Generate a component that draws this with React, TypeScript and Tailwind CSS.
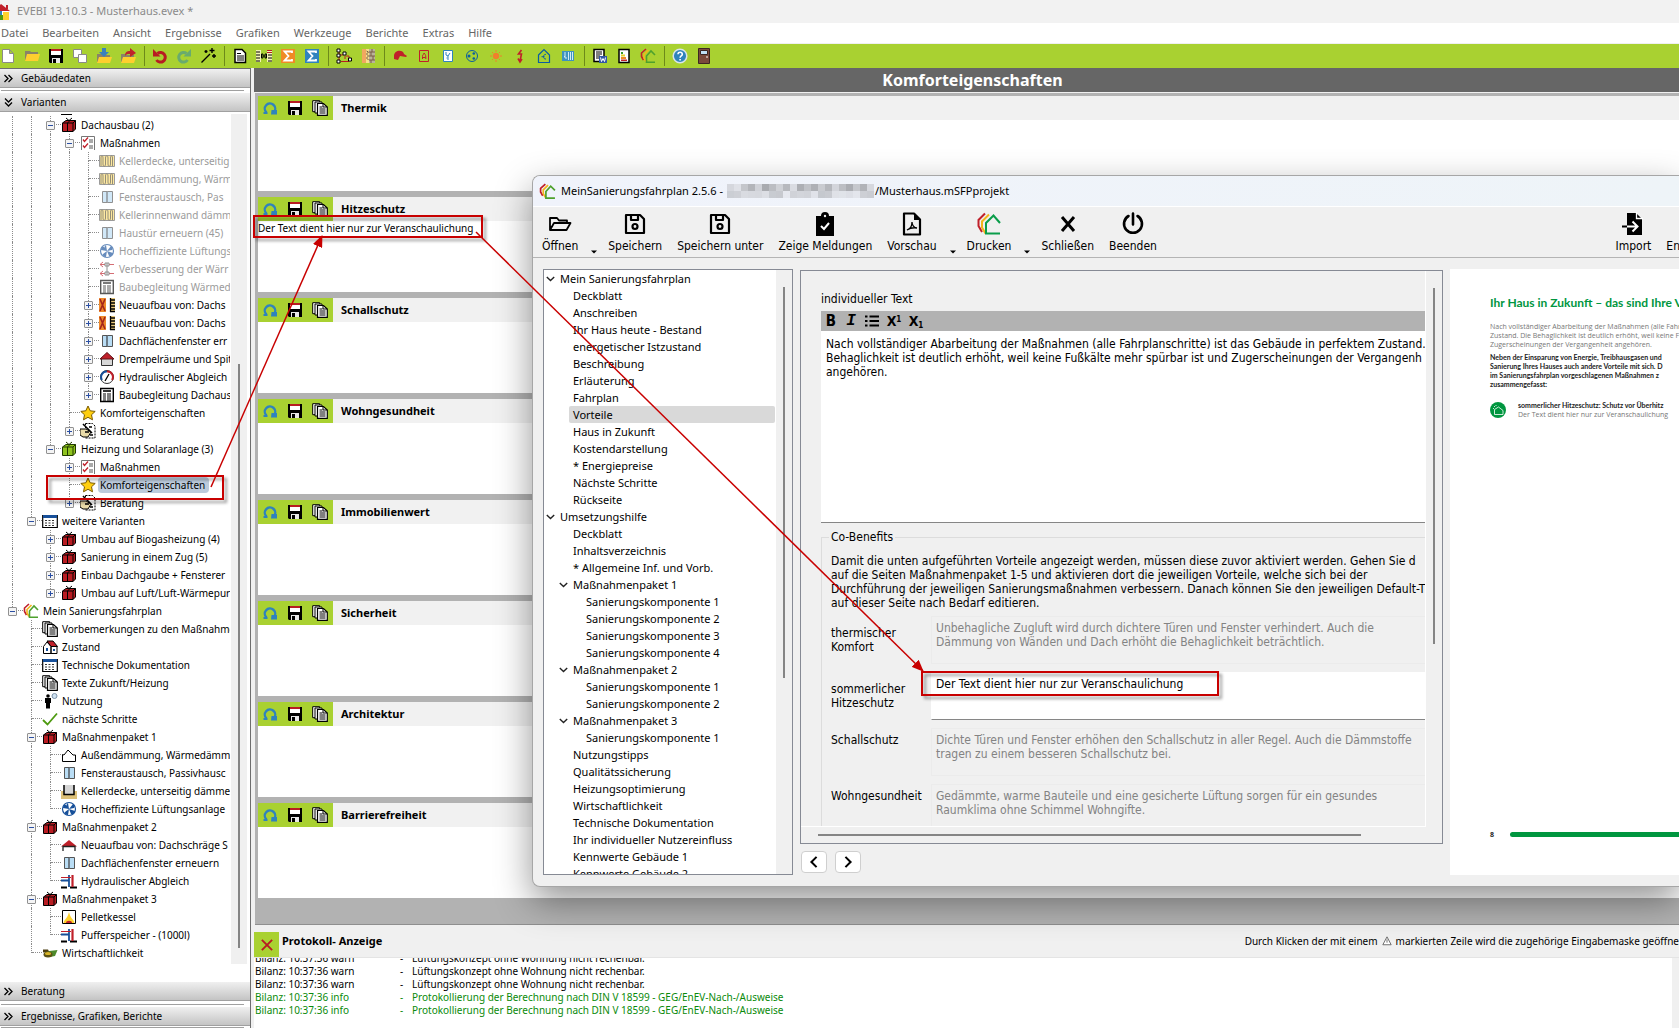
import { Fragment, type ReactNode } from "react";

// Symbole, alle auf einem 16x16 Raster
const icons: Record<string, ReactNode> = {
  newDoc: (
    <path d="M2.500 1.500h7l4 4v9h-11z M9.500 1.500v4h4" fill="#fff" stroke="#8a8a8a" />
  ),
  folder: (
    <>
      <path d="M1 3h5l1 1h7v8H1z" fill="#8a8368" />
      <path d="M3 6h13l-2 7H1z" fill="#ffcf2e" />
    </>
  ),
  floppy: (
    <>
      <path d="M1 1h14v14H2l-1-1z" fill="#000" />
      <path d="M3 1h10v6H3z" fill="#fff" />
      <path d="M3 1h10v2H3z" fill="#b81c22" />
      <path d="M4 10h8v5H4z" fill="#e8e8e8" />
      <path d="M5 11h3v4H5z" fill="#000" />
    </>
  ),
  copy: (
    <>
      <path d="M1.500 1.500h8v8h-8z" fill="#fff" stroke="#8a8a8a" />
      <path d="M6.500 6.500h8v8h-8z" fill="#fff" stroke="#8a8a8a" />
    </>
  ),
  folderDown: (
    <>
      <path d="M1 6h5l1 1h7v7H1z" fill="#8a8368" />
      <path d="M3 9h13l-2 6H1z" fill="#ffcf2e" />
      <path d="M6 0h4v4h3L8 9 3 4h3z" fill="#3a80bd" />
    </>
  ),
  folderOut: (
    <>
      <path d="M1 6h5l1 1h7v7H1z" fill="#8a8368" />
      <path d="M3 9h13l-2 6H1z" fill="#ffcf2e" />
      <path d="M5 8c0-4 2-5 5-5V0l6 5-6 4V6c-2 0-4 0-5 2z" fill="#c0232a" />
    </>
  ),
  undo: (
    <>
      <path d="M5.500 5.500A4.800 4.800 0 1 1 4.500 12" fill="none" stroke="#b81c22" strokeWidth="3" />
      <path d="M1 1v7.500h7.500z" fill="#b81c22" />
    </>
  ),
  redo: (
    <>
      <path d="M10.500 5.500A4.800 4.800 0 1 0 11.500 12" fill="none" stroke="#69ab6e" strokeWidth="3" />
      <path d="M15 1v7.500H7.500z" fill="#69ab6e" />
    </>
  ),
  wand: (
    <path d="M1.500 14.500 10 6M12 0v5M9.500 2.500h5M6 2v3M4.500 3.500h3M14 6v4M12 8h4" stroke="#000" strokeWidth="1.400" fill="none" />
  ),
  doc: (
    <>
      <path d="M3 1.500h7l3.500 3.500v9.500H3z" fill="#fff" stroke="#000" strokeWidth="1.500" />
      <path d="M5 5.500h4M5 8h7M5 10h7M5 12h7" stroke="#000" />
    </>
  ),
  docLink: (
    <>
      <path d="M0 2h5v12H0zM11 2h5v12h-5z" fill="#f3f3b8" />
      <path d="M0 4h4M0 7h4M0 10h4M0 13h4M12 7h4M12 10h4M12 13h4" stroke="#000" />
      <path d="M11 2.500h5M11 4.500h5" stroke="#b81c22" />
      <path d="M5.500 6v4h1.500V6zM9 6v4h1.500V6zM7 8h2" stroke="#000" fill="none" />
    </>
  ),
  sigmaOrange: (
    <>
      <path d="M1 1h14v14H1z" fill="#f08a24" />
      <path d="M12 5V3.500H4.500L8.500 8l-4 4.500H12V11" fill="none" stroke="#fff" strokeWidth="1.800" />
    </>
  ),
  sigmaBlue: (
    <>
      <path d="M1 1h14v14H1z" fill="#2f83bd" />
      <path d="M12 5V3.500H4.500L8.500 8l-4 4.500H12V11" fill="none" stroke="#fff" strokeWidth="1.800" />
    </>
  ),
  nodes: (
    <>
      <path d="M3 3v10M3 7h4M9 8v3M5 13.500h8M13 11V8h-3" fill="none" stroke="#b81c22" />
      <path d="M1 1h3v3H1zM1 6h3v3H1zM1 12h3v3H1zM7 4h3v3H7zM12.500 10h3v3h-3z" fill="#fff" stroke="#000" />
    </>
  ),
  wall: (
    <>
      <path d="M2 1h4v14H2z" fill="#f0a860" />
      <path d="M6 1h3v14H6z" fill="#f5e08a" />
      <path d="M9 1h6v14H9z" fill="#b9b39a" />
      <path d="M6.500 3l2 1-2 2 2 2-2 2 2 2M9 4h6M9 8h6M9 12h6M12 1v3M11 4v4M13 8v4M11 12v3" fill="none" stroke="#7a5c46" />
    </>
  ),
  cap: <path d="M2 8c0-6 9-7 10-2l3 2-1 1-6-1-2 4-4-1z" fill="#c0202a" />,
  boxA: (
    <>
      <path d="M3.500 2.500h9v11h-9z" fill="none" stroke="#c0202a" />
      <path d="M6.500 11V8.500C6.500 6 8 7 8 5c2 2 1.800 3 1.800 6M6.500 9.500h3" fill="none" stroke="#c0202a" />
    </>
  ),
  boxY: (
    <>
      <path d="M3.500 2.500h9v11h-9z" fill="#fff" stroke="#2f83bd" />
      <path d="M6 4v3l2 1 2-3M8 8v4M6.500 10h1" fill="none" stroke="#2f83bd" />
    </>
  ),
  fanLine: (
    <>
      <circle cx="8" cy="8" r="5.500" fill="none" stroke="#0b5da0" />
      <circle cx="5" cy="8" r="1.500" fill="#0b5da0" />
      <circle cx="9.800" cy="5.500" r="1.300" fill="#0b5da0" />
      <circle cx="9.800" cy="10.500" r="1.300" fill="#0b5da0" />
    </>
  ),
  sun: (
    <>
      <circle cx="8" cy="8" r="3.200" fill="#f07f2c" />
      <path d="M8 2v2M8 12v2M2 8h2M12 8h2M4 4l1 1M11 11l1 1M4 12l1-1M11 5l1-1" stroke="#f07f2c" />
    </>
  ),
  bolt: <path d="M9.500 2 6.500 6h3L8 13M6 10.500 8 14l2-3" fill="none" stroke="#c0202a" strokeWidth="1.600" />,
  houseEuro: (
    <>
      <path d="M2.500 7 8 1.500 13.500 7v7.500h-11z" fill="none" stroke="#0b5da0" strokeWidth="1.200" />
      <path d="M10 6.500c-3-1-3.500 5 0 4.500M5.500 8.700h3" fill="none" stroke="#0b5da0" />
    </>
  ),
  panel: (
    <>
      <path d="M2 3h12v10H2z" fill="#3d93bf" />
      <path d="M5 4v4l-1 1h2v2M8.500 4v8M10.500 4v8M12.500 4v8" stroke="#d4ecf5" fill="none" />
    </>
  ),
  docWord: (
    <>
      <path d="M2 1.500h10v12H2z" fill="#fff" stroke="#000" strokeWidth="1.500" />
      <path d="M4 4h6M4 6h6M4 8h4M4 10h3" stroke="#000" />
      <path d="M7 8h8v7H7z" fill="#3357a5" />
      <path d="m8.500 9.500 1 4 1.500-3 1.500 3 1-4" fill="none" stroke="#fff" />
    </>
  ),
  energyLabel: (
    <>
      <path d="M3 1.500h10v13H3z" fill="#fff" stroke="#000" strokeWidth="1.500" />
      <path d="M5 4h2v2H5z" fill="#3a9a28" />
      <path d="M5 6.500h4v2H5z" fill="#e5d22b" />
      <path d="M5 9h5v2H5z" fill="#f08a24" />
      <path d="M5 11.500h6v1.500H5z" fill="#c0202a" />
    </>
  ),
  houses: (
    <g fill="none" strokeWidth="1.600">
      <path d="M3.500 12 1.500 8.500V5L6 1" stroke="#c0202a" />
      <path d="M6 13.500 4 10V6.500L8.500 2" stroke="#f3b51b" />
      <path d="m15 7-4-4-4.500 5v6.200H15" stroke="#4ea12d" />
    </g>
  ),
  help: (
    <>
      <circle cx="8" cy="8" r="6.800" fill="#2f83bd" stroke="#d8e4ea" strokeWidth="1.500" />
      <path d="M6 6.300c0-3 4.300-2.600 4.300 0 0 1.600-2.200 1.600-2.200 3.400M8.100 11v1.500" fill="none" stroke="#fff" strokeWidth="1.600" />
    </>
  ),
  door: (
    <>
      <path d="M2.500.5h11v15h-11z" fill="#7a4a3c" stroke="#3c2622" />
      <path d="M4.500 2.500h7v4h-7z" fill="#bfe0f5" stroke="#3c2622" />
      <path d="M10 9h2" stroke="#fff" />
    </>
  ),
  reload: (
    <>
      <path d="M4.500 12.500A5.200 5.200 0 1 1 12 12" fill="none" stroke="#2f83bd" strokeWidth="2.400" />
      <path d="M9.500 10h5.500v4.500H9z" fill="#2f83bd" />
      <path d="M1.500 12h4v2h-4z" fill="#2f83bd" />
    </>
  ),
  docs: (
    <>
      <path d="M.7.7h7v11h-7z" fill="#fff" stroke="#000" />
      <path d="M3 2h7v11H3z" fill="#fff" stroke="#000" />
      <path d="M5.500 3.500h6l3.800 3.500v8.300H5.500z" fill="#fff" stroke="#000" strokeWidth="1.200" />
      <path d="M7.500 7h3M7.500 9h6M7.500 11h6M7.500 13h6M11 4v3h4" stroke="#000" fill="none" />
    </>
  ),
  packRed: (
    <>
      <path d="M1.500 6 5 3.500h9.500V12L12 14.500H1.500z" fill="#b81c22" stroke="#000" />
      <path d="M1.500 6H12l2.500-2.500M12 6v8.500M6.500 14.500V6L9 3.500M5 1l3 2.500L11 1" stroke="#000" fill="none" />
    </>
  ),
  packGreen: (
    <>
      <path d="M1.500 6 5 3.500h9.500V12L12 14.500H1.500z" fill="#8fc31f" stroke="#223c00" />
      <path d="M1.500 6H12l2.500-2.500M12 6v8.500M6.500 14.500V6L9 3.500M5 1l3 2.500L11 1" stroke="#223c00" fill="none" />
    </>
  ),
  checklist: (
    <>
      <path d="M1.500 15V1.500h13V15" fill="#fff" stroke="#777" />
      <path d="m3 4.500 1.500 2L8 2.500M3 10.500l1.500 2L8 8.500" fill="none" stroke="#c0202a" strokeWidth="1.300" />
      <path d="M9 5h4M9 7h4M9 11h4M9 13h4" stroke="#555" />
    </>
  ),
  insulation: (
    <>
      <path d="M.5 2.500h15v11H.5z" fill="#fddc70" stroke="#666" />
      <path d="M2 13V5c0-3 2-3 2 0v6c0 3 2.500 3 2.500 0V5c0-3 2.500-3 2.500 0v6c0 3 2.500 3 2.500 0V5c0-3 2-3 2 0v8" fill="none" stroke="#5b5230" />
    </>
  ),
  window: (
    <>
      <path d="M3.500 2.500h10v11h-10z" fill="#b9ddf5" stroke="#555" />
      <path d="M8.500 2.500v11M7.500 3v10" stroke="#6c7c88" />
    </>
  ),
  fan: (
    <>
      <circle cx="8" cy="8" r="6.500" fill="#fff" stroke="#17509a" strokeWidth="1.200" />
      <path d="M8 8C5 6 5 3 7 2l1 6 4-5c2 1 2 3 1 4L8 8l6 2c0 2-2 4-4 3L8 8l-1 6c-2 0-4-2-3-3l4-3-6-1c0-2 1-4 3-3z" fill="#17509a" />
    </>
  ),
  heatPipes: (
    <>
      <path d="M1 3.500h14M1 12.500h14" stroke="#c0202a" strokeWidth="1.200" />
      <path d="m4 1-3 2.500L4 6M4 10l-3 2.500L4 15" fill="none" stroke="#c0202a" />
      <path d="M8 2v12M6 2h4v3H6zM6 11h4v3H6z" fill="#fff" stroke="#555" />
    </>
  ),
  report: (
    <>
      <path d="M1.700 1.500h12.600v13H1.700z" fill="#fff" stroke="#000" strokeWidth="1.400" />
      <path d="M4 4h8" stroke="#000" strokeWidth="1.600" />
      <path d="M4 7h3M8 7h4M4 9h3M8 9h4M4 11h3M8 11h4M4 13h3M8 13h4" stroke="#000" />
    </>
  ),
  roofBuild: (
    <>
      <path d="M0 1h7v14H0z" fill="#ef8a2c" />
      <path d="m1 2 5 12M6 2 1 14" stroke="#a3261c" strokeWidth="1.600" />
      <path d="M11 1h5v14h-5z" fill="#e8c87a" />
      <path d="M11.500 1v14M11 3h5M11 6h5M11 9h5M11 12h5M11 14.500h5" stroke="#000" strokeWidth="1.300" />
    </>
  ),
  attic: (
    <>
      <path d="M2.500 7.500h11v7h-11z" fill="#d8d8d8" stroke="#333" />
      <path d="M1 8 8 1.500 15 8z" fill="#c0202a" stroke="#5c1015" />
    </>
  ),
  gauge: (
    <>
      <circle cx="8" cy="8" r="6.500" fill="#fff" stroke="#333" strokeWidth="1" />
      <path d="M3 11A5.500 5.500 0 0 1 8 2.500" fill="none" stroke="#17509a" strokeWidth="2" />
      <path d="M8 2.500A5.500 5.500 0 0 1 13 11" fill="none" stroke="#c0202a" strokeWidth="2" />
      <path d="M6 12 10 5" stroke="#000" strokeWidth="1.300" />
    </>
  ),
  star: (
    <path d="m8 1 2.200 4.800 5 .6-3.700 3.400 1 5L8 12.300l-4.500 2.500 1-5L.8 6.400l5-.6z" fill="#ffcf10" stroke="#7a5a00" />
  ),
  advice: (
    <>
      <path d="M5.500.5h7l2.500 2.500v12H5.500z" fill="#fff" stroke="#000" strokeDasharray="2 1" />
      <path d="M0 6h6l5 3-3 5H3l-3-2z" fill="#e9dba8" stroke="#000" />
      <path d="m3 1 9 9M9 4h3M5 9h4M10 12h3" stroke="#000" strokeWidth="1.600" />
    </>
  ),
  table: (
    <>
      <path d="M.7 2.500h14.600v12H.7z" fill="#fff" stroke="#000" strokeWidth="1.200" />
      <path d="M1 2h14v3H1z" fill="#17509a" />
      <path d="M3 7.500h10M3 10h10M3 12.500h10" stroke="#333" strokeDasharray="2 1.500" />
    </>
  ),
  house: (
    <>
      <path d="M1.500 7.500 5 3l4 4.500v7H1.500zM9 7.500h6v7H9z" fill="#fff" stroke="#000" />
      <path d="M5 2h6l4.500 5.500H9z" fill="#c0202a" stroke="#000" />
      <path d="M4 9h2v3H4zM11 10h2v2h-2z" fill="#17509a" />
    </>
  ),
  person: (
    <>
      <circle cx="6" cy="3" r="1.800" fill="#000" />
      <path d="M3 5h6v5H8v5.500H4V10H3z" fill="#000" />
      <circle cx="12.500" cy="3" r="2.500" fill="#cfe2f2" stroke="#7d93a8" />
    </>
  ),
  tick: <path d="m1 9 4.500 4.500L15 2.500" fill="none" stroke="#4e9a10" strokeWidth="1.800" />,
  outline: <path d="M1.500 14.500V7.500L3 8l4-5 5 5h2.500v6.500z" fill="#fff" stroke="#000" />,
  cellar: (
    <>
      <path d="M0 8h16v8H0z" fill="#dcc078" />
      <path d="M3 2h10v9H3z" fill="#d5d5d5" />
      <path d="M3 2v9.500h10V2" fill="none" stroke="#000" strokeWidth="1.500" />
    </>
  ),
  roof: (
    <>
      <path d="M0 9.500 8 3l8 6.500z" fill="#c0202a" />
      <path d="M2 14V9.500h12V14" fill="none" stroke="#222" strokeWidth="1.300" />
    </>
  ),
  pipes: (
    <>
      <path d="M0 14.500h6M9 14.500h7" stroke="#000" strokeWidth="2" />
      <path d="M0 7.500h8M8 2v12" stroke="#17509a" strokeWidth="1.800" />
      <path d="M11.500 2v12" stroke="#c0202a" strokeWidth="2.200" />
      <path d="M0 4.500h10" stroke="#c0202a" />
    </>
  ),
  flame: (
    <>
      <path d="M1.500 1.500h13v13h-13z" fill="#fff" stroke="#000" />
      <path d="M2.500 14c0-3 4-4 5.500-11 1.500 7 5.500 8 5.500 11z" fill="#ffd22e" />
      <path d="M5 14c0-3 6-3 6 0z" fill="#c0202a" />
    </>
  ),
  money: (
    <>
      <path d="M3 6.500 15.500 5 13 11l-5 1z" fill="#4e8a2c" />
      <path d="M1 4.500h5l1 2-6 1z" fill="#4a3c10" />
      <ellipse cx="6" cy="9.500" rx="4.500" ry="3" fill="#5c5214" />
      <ellipse cx="6" cy="8.500" rx="3" ry="1.500" fill="#d9b52a" />
    </>
  ),
  appHouse: (
    <>
      <path d="M2 7h12v9H2z" fill="#fff" />
      <path d="M0 7 7 0l9 7z" fill="#c0202a" />
      <path d="M12 1h2v4h-2z" fill="#c0202a" />
      <path d="M9 8h6v8H9z" fill="#ffd22e" />
      <path d="M2 11h7v5H2z" fill="#4e9a10" />
      <path d="M4 7h4v4H4z" fill="#2f83bd" />
    </>
  ),
};

function Icon({ name, className = "size-4" }: { name: string; className?: string }) {
  return (
    <svg viewBox="0 0 16 16" className={`shrink-0 ${className}`} aria-hidden="true">
      {icons[name]}
    </svg>
  );
}

const menu = ["Datei", "Bearbeiten", "Ansicht", "Ergebnisse", "Grafiken", "Werkzeuge", "Berichte", "Extras", "Hilfe"];

const toolbar = [
  ["newDoc", "folder", "floppy", "copy", "folderDown", "folderOut"],
  ["undo", "redo", "wand"],
  ["doc", "docLink", "sigmaOrange", "sigmaBlue"],
  ["nodes", "wall"],
  ["cap", "boxA", "boxY", "fanLine", "sun", "bolt", "houseEuro", "panel"],
  ["docWord", "energyLabel", "houses"],
  ["help", "door"],
];

type Node = {
  level: number;
  icon: string;
  text: string;
  toggle?: "+" | "-";
  muted?: boolean;
  selected?: boolean;
};

const n = (level: number, icon: string, text: string, toggle?: "+" | "-", extra: Partial<Node> = {}): Node => ({
  level,
  icon,
  text,
  toggle,
  ...extra,
});
const muted = { muted: true };

const tree: Node[] = [
  n(2, "packRed", "Dachausbau (2)", "-"),
  n(3, "checklist", "Maßnahmen", "-"),
  n(4, "insulation", "Kellerdecke, unterseitig", undefined, muted),
  n(4, "insulation", "Außendämmung, Wärm", undefined, muted),
  n(4, "window", "Fensteraustausch, Pas", undefined, muted),
  n(4, "insulation", "Kellerinnenwand dämme", undefined, muted),
  n(4, "window", "Haustür erneuern (45)", undefined, muted),
  n(4, "fan", "Hocheffiziente Lüftungs", undefined, muted),
  n(4, "heatPipes", "Verbesserung der Wärr", undefined, muted),
  n(4, "report", "Baubegleitung Wärmed", undefined, muted),
  n(4, "roofBuild", "Neuaufbau von: Dachs", "+"),
  n(4, "roofBuild", "Neuaufbau von: Dachs", "+"),
  n(4, "window", "Dachflächenfenster err", "+"),
  n(4, "attic", "Drempelräume und Spit", "+"),
  n(4, "gauge", "Hydraulischer Abgleich", "+"),
  n(4, "report", "Baubegleitung Dachaus", "+"),
  n(3, "star", "Komforteigenschaften"),
  n(3, "advice", "Beratung", "+"),
  n(2, "packGreen", "Heizung und Solaranlage (3)", "-"),
  n(3, "checklist", "Maßnahmen", "+"),
  n(3, "star", "Komforteigenschaften", undefined, { selected: true }),
  n(3, "advice", "Beratung", "+"),
  n(1, "table", "weitere Varianten", "-"),
  n(2, "packRed", "Umbau auf Biogasheizung (4)", "+"),
  n(2, "packRed", "Sanierung in einem Zug (5)", "+"),
  n(2, "packRed", "Einbau Dachgaube + Fensterer", "+"),
  n(2, "packRed", "Umbau auf Luft/Luft-Wärmepur", "+"),
  n(0, "houses", "Mein Sanierungsfahrplan", "-"),
  n(1, "docs", "Vorbemerkungen zu den Maßnahme"),
  n(1, "house", "Zustand"),
  n(1, "table", "Technische Dokumentation"),
  n(1, "docs", "Texte Zukunft/Heizung"),
  n(1, "person", "Nutzung"),
  n(1, "tick", "nächste Schritte"),
  n(1, "packRed", "Maßnahmenpaket 1", "-"),
  n(2, "outline", "Außendämmung, Wärmedämmv"),
  n(2, "window", "Fensteraustausch, Passivhausc"),
  n(2, "cellar", "Kellerdecke, unterseitig dämme"),
  n(2, "fan", "Hocheffiziente Lüftungsanlage"),
  n(1, "packRed", "Maßnahmenpaket 2", "-"),
  n(2, "roof", "Neuaufbau von: Dachschräge S"),
  n(2, "window", "Dachflächenfenster erneuern"),
  n(2, "pipes", "Hydraulischer Abgleich"),
  n(1, "packRed", "Maßnahmenpaket 3", "-"),
  n(2, "flame", "Pelletkessel"),
  n(2, "pipes", "Pufferspeicher - (1000l)"),
  n(1, "money", "Wirtschaftlichkeit"),
];

// Läuft die gepunktete Linie der Ebene unterhalb der Zeile weiter?
function continues(index: number, level: number) {
  for (let i = index + 1; i < tree.length; i++) {
    if (tree[i].level < level) return false;
    if (tree[i].level === level) return true;
  }
  return false;
}

function TreeRow({ node, index }: { node: Node; index: number }) {
  const guides = Array.from({ length: node.level }, (_, l) => continues(index, l));
  return (
    <li className="flex h-[18px] items-center pl-1 whitespace-nowrap">
      {guides.map((on, l) => (
        <span key={l} className="flex h-full w-[19px] shrink-0 pl-2">
          {on && <span className="border-l border-dotted border-[#8c8c8c]" />}
        </span>
      ))}
      <span className="grid h-full w-[19px] shrink-0 grid-cols-[9px_10px] grid-rows-2">
        <span className="col-start-1 row-start-1 border-r border-dotted border-[#8c8c8c]" />
        <span className="col-start-2 row-start-1 border-b border-dotted border-[#8c8c8c]" />
        {continues(index, node.level) && (
          <span className="col-start-1 row-start-2 border-r border-dotted border-[#8c8c8c]" />
        )}
        {node.toggle && (
          <button
            aria-label={node.toggle === "+" ? "Aufklappen" : "Zuklappen"}
            className="col-span-2 col-start-1 row-span-2 row-start-1 ml-1 flex size-[9px] items-center justify-center self-center rounded-[1px] border border-[#919191] bg-[#f4f4f4]"
          >
            <svg viewBox="0 0 7 7" className="size-[7px] shrink-0" aria-hidden="true">
              <path d={node.toggle === "+" ? "M1 3.500h5M3.500 1v5" : "M1 3.500h5"} stroke="#2b4fa3" />
            </svg>
          </button>
        )}
      </span>
      <Icon name={node.icon} className={node.muted ? "size-4 opacity-65" : "size-4"} />
      <span
        className={`ml-0.5 rounded-sm pl-0.5 leading-[16px] ${node.muted ? "text-[#9b9b9b]" : ""} ${
          node.selected ? "bg-[#bccbdc] pr-1" : ""
        }`}
      >
        {node.text}
      </span>
    </li>
  );
}

function SectionHeader({ title, open }: { title: string; open?: boolean }) {
  return (
    <button className="flex h-[19px] w-full shrink-0 items-center border-b border-[#a0a0a0] bg-linear-to-b from-[#f0f0f0] to-[#c4c4c4] pl-1 text-left">
      <svg viewBox="0 0 9 9" className={`size-[9px] ${open ? "rotate-90" : ""}`} aria-hidden="true">
        <path d="m.5 1 3.500 3.500L.5 8M4.500 1 8 4.500 4.500 8" fill="none" stroke="#000" strokeWidth="1.300" />
      </svg>
      <span className="ml-2">{title}</span>
    </button>
  );
}

function Sidebar() {
  return (
    <nav className="mr-[3px] flex w-[251px] shrink-0 flex-col border-t border-r border-[#6e6e6e] bg-white">
      <SectionHeader title="Gebäudedaten" />
      <div className="mx-px mt-0.5 mr-1.5 mb-0.5 border-b border-[#a0a0a0]" />
      <SectionHeader title="Varianten" open />
      <div className="flex min-h-0 flex-1 overflow-hidden pt-0.5">
        <ul className="w-[230px] overflow-hidden">
          <li className="flex h-0.5 pl-[61px]">
            <span className="h-px w-[11px] bg-black" />
          </li>
          {tree.map((node, i) => (
            <TreeRow key={i} node={node} index={i} />
          ))}
        </ul>
        <div className="mb-[18px] ml-px flex w-4 justify-center bg-[#f0f0f0] pt-[250px] pb-4">
          <div className="w-0.5 bg-[#858585]" />
        </div>
      </div>
      <SectionHeader title="Beratung" />
      <div className="mx-px mt-[3px] mr-1.5 mb-0.5 border-b border-[#a0a0a0]" />
      <SectionHeader title="Ergebnisse, Grafiken, Berichte" />
      <div className="mx-px mt-px mr-1.5 border-b border-[#a0a0a0]" />
    </nav>
  );
}

const comfort = [
  { title: "Thermik", text: "" },
  { title: "Hitzeschutz", text: "Der Text dient hier nur zur Veranschaulichung" },
  { title: "Schallschutz", text: "" },
  { title: "Wohngesundheit", text: "" },
  { title: "Immobilienwert", text: "" },
  { title: "Sicherheit", text: "" },
  { title: "Architektur", text: "" },
  { title: "Barrierefreiheit", text: "" },
];

const log = [
  { kind: "warn", text: "Lüftungskonzept ohne Wohnung nicht rechenbar." },
  { kind: "warn", text: "Lüftungskonzept ohne Wohnung nicht rechenbar." },
  { kind: "warn", text: "Lüftungskonzept ohne Wohnung nicht rechenbar." },
  { kind: "info", text: "Protokollierung der Berechnung nach DIN V 18599 - GEG/EnEV-Nach-/Ausweise" },
  { kind: "info", text: "Protokollierung der Berechnung nach DIN V 18599 - GEG/EnEV-Nach-/Ausweise" },
];

function ComfortPage() {
  return (
    <main className="flex min-w-0 flex-1 flex-col">
      <h1 className="h-6 shrink-0 bg-[#666] text-center text-[16px] leading-6 font-bold text-white">
        <span className="ml-3">Komforteigenschaften</span>
      </h1>
      <div className="mt-px ml-px flex min-h-0 flex-1 flex-col gap-1.5 overflow-hidden border-b border-[#8f8f8f] bg-[#b2b2b2] pt-[3px] pl-[3px]">
        {comfort.map((c, i) => (
          <section key={c.title} className="flex shrink-0 flex-col">
            <div className="flex h-6 items-center bg-[#f1f1f1]">
              <div className="flex h-full w-[75px] items-center gap-[9px] bg-[#a9d131] pl-1">
                <button aria-label="Zurücksetzen"><Icon name="reload" /></button>
                <button aria-label="Speichern"><Icon name="floppy" /></button>
                <button aria-label="Vorlagen"><Icon name="docs" /></button>
              </div>
              <label htmlFor={`komfort-${i}`} className="ml-2 text-[11px] font-bold">
                {c.title}
              </label>
            </div>
            <textarea
              id={`komfort-${i}`}
              defaultValue={c.text}
              className="block h-[71px] w-full resize-none bg-white leading-[14px] outline-none"
            />
          </section>
        ))}
      </div>
      <footer className="h-[103px] shrink-0">
        <div className="flex h-[33px] items-center border-b border-[#e4e4e4] bg-[#f0f0f0]">
          <button aria-label="Protokoll schließen" className="flex h-[25px] w-[25px] items-center justify-center self-end bg-[#a9d131]">
            <svg viewBox="0 0 14 14" className="size-3" aria-hidden="true">
              <path d="m1 1 12 12M13 1 1 13" stroke="#b81c22" strokeWidth="2.200" />
            </svg>
          </button>
          <h2 className="ml-[3px] text-[11px] font-bold">Protokoll- Anzeige</h2>
          <p className="ml-auto flex items-center gap-1 whitespace-nowrap">
            Durch Klicken der mit einem
            <svg viewBox="0 0 12 12" className="size-2.5" aria-hidden="true">
              <path d="M6 1 11 10.500H1z M6 4v4" fill="#fff" stroke="#555" />
            </svg>
            markierten Zeile wird die zugehörige Eingabemaske geöffne
          </p>
        </div>
        <div className="flex h-[70px] bg-white">
          <div className="flex flex-1 flex-col justify-end overflow-hidden pb-[11px] pl-px">
            {log.map((l, i) => (
              <div
                key={i}
                className={`grid h-[13px] shrink-0 grid-cols-[145px_12px_1fr] leading-[13px] whitespace-nowrap ${
                  l.kind === "info" ? "text-[#0a8a0a]" : ""
                }`}
              >
                <span>Bilanz: 10:37:36 {l.kind}</span>
                <span>-</span>
                <span>{l.text}</span>
              </div>
            ))}
          </div>
          <div className="w-[7px] bg-[#f0f0f0]" />
        </div>
      </footer>
    </main>
  );
}

const ink = { fill: "none", stroke: "#000", strokeWidth: 2.2, strokeLinejoin: "round", strokeLinecap: "round" } as const;

const dialogIcons: Record<string, ReactNode> = {
  open: <path {...ink} strokeWidth={1.8} d="M2 18V6h7l2 2.500h8V11M2 18h16.500l4-7H6z" />,
  save: (
    <g {...ink}>
      <path d="M3 3h14l4 4v14H3z" />
      <path d="M8 3v5h7V3" />
      <circle cx="12" cy="14.500" r="2.500" />
    </g>
  ),
  clipboard: (
    <>
      <path d="M3 4h5a4 4 0 0 1 8 0h5v20H3z" />
      <circle cx="12" cy="4" r="1.200" fill="#efefef" />
      <path d="m8 14 3 3 5-6" fill="none" stroke="#fff" strokeWidth="2" />
    </>
  ),
  pdf: (
    <>
      <path {...ink} d="M4 1.500h10l6 6v15H4z" />
      <path d="M14 1v7h7z" />
      <path d="M7 18c3-1 5-4 5-8 0 3 2 6 5 6-3-.5-7 0-10 2z" fill="none" stroke="#000" strokeWidth="1.300" />
    </>
  ),
  print: (
    <g fill="none" strokeWidth="2">
      <path d="M5 20 1.500 14V8L8 1.500" stroke="#c0202a" />
      <path d="M8.500 21.500 5 15.500V9.500l7-7" stroke="#f3b51b" />
      <path d="m23 11-6.500-7.500L9 11v10.500h14" stroke="#0a9d4a" />
    </g>
  ),
  close: <path d="m6 5 12 14M18 5 6 19" stroke="#000" strokeWidth="3" />,
  power: <path {...ink} strokeWidth={2.6} d="M12 1.500v11M7.500 4a9 9 0 1 0 9 0" />,
  import: (
    <>
      <path d="M6 1h9l6 6v16H6z" />
      <path d="M15.500 0v6.500H22" fill="none" stroke="#fff" strokeWidth="1.300" />
      <path d="M6 14.500h10M11.500 9.500l5 5-5 5" fill="none" stroke="#fff" strokeWidth="2" />
      <path d="M1 14.500h5" stroke="#000" strokeWidth="2" />
    </>
  ),
};

const actions = [
  { icon: "open", label: "Öffnen", more: true },
  { icon: "save", label: "Speichern" },
  { icon: "save", label: "Speichern unter" },
  { icon: "clipboard", label: "Zeige Meldungen" },
  { icon: "pdf", label: "Vorschau", more: true },
  { icon: "print", label: "Drucken", more: true },
  { icon: "close", label: "Schließen" },
  { icon: "power", label: "Beenden" },
];

const pages: { level: 0 | 1 | 2; text: string; open?: boolean }[] = [
  { level: 0, text: "Mein Sanierungsfahrplan", open: true },
  { level: 1, text: "Deckblatt" },
  { level: 1, text: "Anschreiben" },
  { level: 1, text: "Ihr Haus heute - Bestand" },
  { level: 1, text: "energetischer Istzustand" },
  { level: 1, text: "Beschreibung" },
  { level: 1, text: "Erläuterung" },
  { level: 1, text: "Fahrplan" },
  { level: 1, text: "Vorteile" },
  { level: 1, text: "Haus in Zukunft" },
  { level: 1, text: "Kostendarstellung" },
  { level: 1, text: "* Energiepreise" },
  { level: 1, text: "Nächste Schritte" },
  { level: 1, text: "Rückseite" },
  { level: 0, text: "Umsetzungshilfe", open: true },
  { level: 1, text: "Deckblatt" },
  { level: 1, text: "Inhaltsverzeichnis" },
  { level: 1, text: "* Allgemeine Inf. und Vorb." },
  { level: 1, text: "Maßnahmenpaket 1", open: true },
  { level: 2, text: "Sanierungskomponente 1" },
  { level: 2, text: "Sanierungskomponente 2" },
  { level: 2, text: "Sanierungskomponente 3" },
  { level: 2, text: "Sanierungskomponente 4" },
  { level: 1, text: "Maßnahmenpaket 2", open: true },
  { level: 2, text: "Sanierungskomponente 1" },
  { level: 2, text: "Sanierungskomponente 2" },
  { level: 1, text: "Maßnahmenpaket 3", open: true },
  { level: 2, text: "Sanierungskomponente 1" },
  { level: 1, text: "Nutzungstipps" },
  { level: 1, text: "Qualitätssicherung" },
  { level: 1, text: "Heizungsoptimierung" },
  { level: 1, text: "Wirtschaftlichkeit" },
  { level: 1, text: "Technische Dokumentation" },
  { level: 1, text: "Ihr individueller Nutzereinfluss" },
  { level: 1, text: "Kennwerte Gebäude 1" },
  { level: 1, text: "Kennwerte Gebäude 2" },
];
const indent = ["pl-0", "pl-[13px]", "pl-[26px]"];

const benefits = [
  {
    label: "thermischer\nKomfort",
    text: "Unbehagliche Zugluft wird durch dichtere Türen und Fenster verhindert. Auch die\nDämmung von Wänden und Dach erhöht die Behaglichkeit beträchtlich.",
  },
  { label: "sommerlicher\nHitzeschutz", text: "Der Text dient hier nur zur Veranschaulichung", active: true },
  {
    label: "Schallschutz",
    text: "Dichte Türen und Fenster erhöhen den Schallschutz in aller Regel. Auch die Dämmstoffe\ntragen zu einem besseren Schallschutz bei.",
  },
  {
    label: "Wohngesundheit",
    text: "Gedämmte, warme Bauteile und eine gesicherte Lüftung sorgen für ein gesundes\nRaumklima ohne Schimmel Wohngifte.",
  },
];

// Unkenntlich gemachter Pfad in der Titelleiste
const mosaic = [
  "bg-[#d5d7dd]", "bg-[#dfe1e7]", "bg-[#c4c6cb]", "bg-[#b3b5ba]", "bg-[#d0d2d8]", "bg-[#a9abb0]", "bg-[#bbbdc2]",
  "bg-[#cfd1d6]", "bg-[#b7b9be]", "bg-[#dadce2]", "bg-[#adafb4]", "bg-[#c0c2c7]", "bg-[#aeb0b5]", "bg-[#c9cbd0]",
  "bg-[#b5b7bc]", "bg-[#d3d5db]", "bg-[#bcbec3]", "bg-[#abadb2]", "bg-[#c6c8cd]", "bg-[#b1b3b8]", "bg-[#d6d8de]",
];

function PageTree() {
  return (
    <div className="flex w-[250px] shrink-0 overflow-hidden border border-[#868a94] bg-white">
      <ul className="flex-1 overflow-hidden pl-px">
        {pages.map((p, i) => (
          <li key={i} className={`flex h-[17px] items-center text-[11px] leading-[17px] ${indent[p.level]}`}>
            <span className="flex w-[11px] shrink-0 justify-center">
              {p.open && (
                <svg viewBox="0 0 9 6" className="h-1.5 w-[9px]" aria-hidden="true">
                  <path d="m.8 1 3.700 3.600L8.200 1" fill="none" stroke="#222" strokeWidth="1.400" />
                </svg>
              )}
            </span>
            <a
              href="#"
              className={`mr-px flex-1 rounded-xs pl-1 whitespace-nowrap ${p.text === "Vorteile" ? "bg-[#d9d9d9]" : ""}`}
            >
              {p.text}
            </a>
          </li>
        ))}
      </ul>
      <div className="flex w-4 justify-center bg-[#f0f0f0] pt-[17px] pb-[196px]">
        <div className="w-0.5 bg-[#858585]" />
      </div>
    </div>
  );
}

function Editor() {
  return (
    <div className="flex min-h-0 w-[643px] shrink-0 flex-col pt-px font-['DejaVu_Sans_Condensed','DejaVu_Sans',sans-serif] text-[12px] leading-[14px]">
      <div className="flex h-[574px] flex-col border border-[#868a94]">
        <div className="flex min-h-0 flex-1">
          <div className="min-w-0 flex-1 overflow-hidden border-r border-b border-white pt-5 pl-5">
            <label htmlFor="individuell" className="block leading-4">individueller Text</label>
            <div className="mt-1 flex h-5 items-center gap-1.5 bg-[#b2b2b2] pl-[3px]">
              <button aria-label="Fett" className="w-3.5 text-[15px] font-bold">B</button>
              <button aria-label="Kursiv" className="w-3.5 font-['Liberation_Mono',monospace] text-[16px] font-bold italic">I</button>
              <button aria-label="Liste" className="w-4 pl-px">
                <svg viewBox="0 0 14 12" className="h-3 w-3.5" aria-hidden="true">
                  <path d="M0 1.500h2.500M0 6h2.500M0 10.500h2.500M4.500 1.500H14M4.500 6H14M4.500 10.500H14" stroke="#000" strokeWidth="1.800" />
                </svg>
              </button>
              <button aria-label="Hochgestellt" className="w-4 text-[14px] font-bold whitespace-nowrap">X<sup className="text-[8px]">1</sup></button>
              <button aria-label="Tiefgestellt" className="w-4 text-[14px] font-bold whitespace-nowrap">X<sub className="text-[8px]">1</sub></button>
            </div>
            <textarea
              id="individuell"
              defaultValue={
                "Nach vollständiger Abarbeitung der Maßnahmen (alle Fahrplanschritte) ist das Gebäude in perfektem Zustand.\nBehaglichkeit ist deutlich erhöht, weil keine Fußkälte mehr spürbar ist und Zugerscheinungen der Vergangenh\nangehören."
              }
              className="block h-[192px] w-full resize-none overflow-hidden border-b border-[#868686] bg-white pt-1.5 pl-[5px] whitespace-pre outline-none"
            />
            <fieldset className="mt-[7px] -mr-4 border border-b-0 border-[#dcdcdc] px-[7px]">
              <legend className="px-0.5">Co-Benefits</legend>
              <p className="mt-2.5 pl-0.5 whitespace-pre">
                {
                  "Damit die unten aufgeführten Vorteile angezeigt werden, müssen diese zuvor aktiviert werden. Gehen Sie d\nauf die Seiten Maßnahmenpaket 1-5 und aktivieren dort die jeweiligen Vorteile, welche sich bei der\nDurchführung der jeweiligen Sanierungsmaßnahmen verbessern. Danach können Sie den jeweiligen Default-T\nauf dieser Seite nach Bedarf editieren."
                }
              </p>
              <div className="mt-1.5 grid grid-cols-[100px_1fr] gap-y-2 pl-0.5">
                {benefits.map((b, i) => (
                  <Fragment key={i}>
                    <label
                      htmlFor={`benefit-${i}`}
                      className={`whitespace-pre ${b.label.includes("\n") ? "pt-2.5" : "pt-[5px]"}`}
                    >
                      {b.label}
                    </label>
                    <textarea
                      id={`benefit-${i}`}
                      defaultValue={b.text}
                      disabled={!b.active}
                      className={`block h-12 w-full resize-none overflow-hidden border pt-1 pl-1 whitespace-pre outline-none ${
                        b.active
                          ? "border-transparent border-b-[#868686] bg-white"
                          : "border-[#ebebeb] text-[#838383]"
                      }`}
                    />
                  </Fragment>
                ))}
              </div>
            </fieldset>
          </div>
          <div className="flex w-4 justify-center pt-[17px] pb-[183px]">
            <div className="w-0.5 bg-[#858585]" />
          </div>
        </div>
        <div className="flex h-4 items-center pr-[81px] pl-[17px]">
          <div className="h-0.5 flex-1 bg-[#858585]" />
        </div>
      </div>
      <div className="mt-[7px] flex gap-2 pl-px">
        {["M10 3 4 9l6 6", "M4 3l6 6-6 6"].map((d, i) => (
          <button
            key={d}
            aria-label={i === 0 ? "Zurück" : "Weiter"}
            className="flex h-[22px] w-[26px] items-center justify-center rounded-sm border border-[#cfcfcf] bg-white"
          >
            <svg viewBox="0 0 14 18" className="h-4 w-3" aria-hidden="true">
              <path d={d} fill="none" stroke="#000" strokeWidth="2.400" />
            </svg>
          </button>
        ))}
      </div>
    </div>
  );
}

function Preview() {
  return (
    <article className="flex min-w-0 flex-1 flex-col overflow-hidden bg-white pt-6 pl-10 font-['Open_Sans',sans-serif] text-[7px] leading-[9px] whitespace-pre text-[#777]">
      <h2 className="font-['Lato',sans-serif] text-[12px] leading-5 font-bold text-[#00963f]">
        Ihr Haus in Zukunft – das sind Ihre V
      </h2>
      <p className="mt-[9px]">
        {
          "Nach vollständiger Abarbeitung der Maßnahmen (alle Fahr\nZustand. Die Behaglichkeit ist deutlich erhöht, weil keine Fu\nZugerscheinungen der Vergangenheit angehören."
        }
      </p>
      <p className="mt-1 font-['Lato',sans-serif] font-bold text-[#222]">
        {
          "Neben der Einsparung von Energie, Treibhausgasen und\nSanierung Ihres Hauses auch andere Vorteile mit sich. D\nim Sanierungsfahrplan vorgeschlagenen Maßnahmen z\nzusammengefasst:"
        }
      </p>
      <div className="mt-3 flex items-center gap-3">
        <svg viewBox="0 0 16 16" className="size-4 shrink-0" aria-hidden="true">
          <circle cx="8" cy="8" r="8" fill="#00963f" />
          <path d="M4.500 12.500v-5L8.500 5 13 8.500v4zM4 4.500h1M3 6.500h1M6 3v1" fill="none" stroke="#fff" strokeWidth=".8" />
        </svg>
        <p>
          <strong className="block font-['Lato',sans-serif] text-[#222]">sommerlicher Hitzeschutz: Schutz vor Überhitz</strong>
          Der Text dient hier nur zur Veranschaulichung
        </p>
      </div>
      <div className="mt-auto mb-9 flex items-center">
        <span className="w-5 font-bold text-[#222]">8</span>
        <span className="h-[5px] flex-1 rounded-l-full bg-[#00963f]" />
      </div>
    </article>
  );
}

function ActionButton({ icon, label }: { icon: string; label: string }) {
  return (
    <button className="flex flex-col items-center gap-0.5 whitespace-nowrap">
      <svg viewBox="0 0 24 24" className="size-6" aria-hidden="true">
        {dialogIcons[icon]}
      </svg>
      <span className="leading-4">{label}</span>
    </button>
  );
}

function PlanDialog() {
  return (
    <div
      role="dialog"
      aria-label="MeinSanierungsfahrplan"
      className="absolute top-[175px] right-0 left-[532px] flex h-[712px] flex-col overflow-hidden rounded-l-lg border border-r-0 border-[#a6a6a6] bg-[#f0f0f0] shadow-[0_14px_36px_rgba(0,0,0,0.42)]"
    >
      <header className="flex h-[31px] shrink-0 items-center border-b border-white bg-linear-to-r from-[#f0f3fb] to-[#eef4f8] pl-1.5 text-[11px]">
        <Icon name="houses" className="size-[17px]" />
        <span className="ml-[5px]">MeinSanierungsfahrplan 2.5.6 -</span>
        <span className="mr-px ml-1 grid grid-cols-21">
          {mosaic.map((c, i) => (
            <span key={i} className={`h-[7px] w-[7px] ${c}`} />
          ))}
          {mosaic.map((c, i) => (
            <span key={i} className={`h-[7px] w-[7px] opacity-60 ${mosaic[(i * 5 + 3) % mosaic.length]}`} />
          ))}
        </span>
        <span>/Musterhaus.mSFPprojekt</span>
      </header>
      <div className="flex h-[51px] shrink-0 items-start gap-[15px] border-b border-[#b4b4b4] pt-[5px] pl-[9px] font-['DejaVu_Sans_Condensed','DejaVu_Sans',sans-serif] text-[12px]">
        {actions.map((a) =>
          a.more ? (
            <div key={a.label} className="-mr-1 flex items-end gap-[13px]">
              <ActionButton icon={a.icon} label={a.label} />
              <button aria-label={`${a.label}: weitere Optionen`}>
                <svg viewBox="0 0 6 4" className="h-1 w-1.5" aria-hidden="true">
                  <path d="M0 .5h6L3 3.500z" />
                </svg>
              </button>
            </div>
          ) : (
            <ActionButton key={a.label} icon={a.icon} label={a.label} />
          ),
        )}
        <div className="ml-auto flex items-end gap-[15px]">
          <ActionButton icon="import" label="Import" />
          <button className="-mr-px leading-4">En</button>
        </div>
      </div>
      <div className="flex min-h-0 flex-1 pt-[11px] pb-[11px] pl-2.5">
        <PageTree />
        <div className="w-[7px] shrink-0" />
        <Editor />
        <div className="w-[7px] shrink-0" />
        <Preview />
      </div>
    </div>
  );
}

function Annotations() {
  return (
    <svg className="pointer-events-none absolute inset-0 h-full w-full" aria-hidden="true">
      <defs>
        <marker id="head" viewBox="0 0 12 10" refX="11" refY="5" markerWidth="12" markerHeight="10" markerUnits="userSpaceOnUse" orient="auto">
          <path d="M0 0 12 5 0 10z" fill="#c80000" />
        </marker>
        <filter id="shade" x="-10%" y="-30%" width="120%" height="180%">
          <feDropShadow dx="3" dy="3" stdDeviation="1.500" floodOpacity="0.4" />
        </filter>
      </defs>
      <g fill="none" stroke="#c80000" strokeWidth="2" filter="url(#shade)">
        <rect x="47" y="476" width="176" height="23" />
        <rect x="254" y="216" width="228" height="21" />
        <rect x="922" y="672" width="296" height="23" />
      </g>
      <g stroke="#c80000" strokeWidth="1.500">
        <path d="M211 487 322 236" markerEnd="url(#head)" />
        <path d="M476 232 923 671" markerEnd="url(#head)" />
      </g>
    </svg>
  );
}

export default function App() {
  return (
    <div className="relative flex h-screen flex-col overflow-hidden bg-[#f0f0f0] font-['Noto_Sans',sans-serif] text-[10px] text-black">
      <header className="flex h-[23px] shrink-0 items-center bg-[#f2f2f2] text-[11px] text-[#8a8a8a]">
        <Icon name="appHouse" className="-ml-1.5 size-4" />
        <span className="ml-[7px]">EVEBI 13.10.3 - Musterhaus.evex *</span>
      </header>
      <div className="flex h-5 shrink-0 items-center gap-3.5 bg-white pl-px text-[11px] text-[#666]">
        {menu.map((m) => (
          <button key={m}>{m}</button>
        ))}
      </div>
      <div className="mt-px flex h-6 shrink-0 items-center bg-[#a9d131]">
        <div className="-ml-1 flex items-center">
          {toolbar.map((group, g) => (
            <Fragment key={g}>
              {g > 0 && (
                <span className="flex w-2 justify-center">
                  <span className="h-5 border-l border-[#6d8a1a]" />
                </span>
              )}
              {group.map((name) => (
                <button key={name} aria-label={name} className="flex w-6 justify-center">
                  <Icon name={name} />
                </button>
              ))}
            </Fragment>
          ))}
        </div>
      </div>
      <div className="flex min-h-0 flex-1">
        <Sidebar />
        <ComfortPage />
      </div>
      <PlanDialog />
      <Annotations />
    </div>
  );
}
